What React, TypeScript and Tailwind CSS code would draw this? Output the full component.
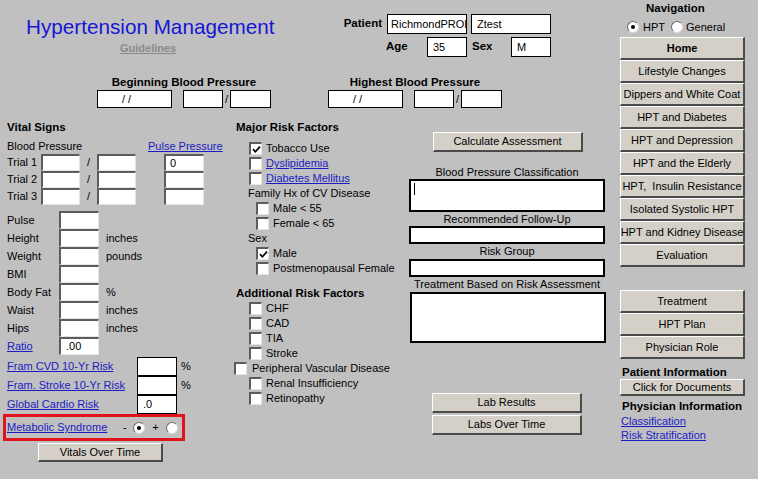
import React from 'react';

const sunken =
  'bg-white border-t-2 border-l-2 border-b border-r border-t-[#5c5c5c] border-l-[#5c5c5c] border-b-[#e4e4e4] border-r-[#e4e4e4]';
const flat = 'bg-white border border-black';
const btnCls =
  'flex items-center justify-center bg-[#d4d0c8] border-t border-l border-b-2 border-r-2 border-t-white border-l-white border-b-[#4a4a4a] border-r-[#4a4a4a] text-[11px] leading-none text-black';

const Box = ({ className = '', children }: { className?: string; children?: React.ReactNode }) => (
  <div className={`overflow-hidden whitespace-nowrap text-[11px] leading-none flex items-center ${className}`}>
    {children}
  </div>
);

const Btn = ({ label, className = '', bold }: { label: string; className?: string; bold?: boolean }) => (
  <div className={`${btnCls} ${bold ? 'font-bold text-[11.5px]' : ''} ${className}`}>{label}</div>
);

const Link = ({ children, className = '' }: { children: React.ReactNode; className?: string }) => (
  <span className={`text-[#1c1cc4] underline whitespace-nowrap ${className}`}>{children}</span>
);

const Check = ({ checked }: { checked?: boolean }) => (
  <span className={`w-[13px] h-[13px] shrink-0 flex items-center justify-center ${sunken}`}>
    {checked && (
      <svg width="9" height="9" viewBox="0 0 9 9">
        <path d="M1 4.2 L3.4 6.8 L8 1.6" fill="none" stroke="#000" strokeWidth="1.7" />
      </svg>
    )}
  </span>
);

const Radio = ({ on }: { on?: boolean }) => (
  <span className="w-[12px] h-[12px] shrink-0 rounded-full bg-white border border-t-[#6a6a6a] border-l-[#6a6a6a] border-b-[#dcdcdc] border-r-[#dcdcdc] flex items-center justify-center">
    {on && <span className="w-[4px] h-[4px] rounded-full bg-black" />}
  </span>
);

const CheckRow = ({
  label,
  checked,
  indent = 21,
  gap = 4,
  link,
}: {
  label: string;
  checked?: boolean;
  indent?: number;
  gap?: number;
  link?: boolean;
}) => (
  <div className="h-[15px] flex items-center" style={{ paddingLeft: indent }}>
    <Check checked={checked} />
    <span style={{ marginLeft: gap }} className="whitespace-nowrap">
      {link ? <Link>{label}</Link> : label}
    </span>
  </div>
);

const vitals: [string, string, string][] = [
  ['Pulse', '', ''],
  ['Height', '', 'inches'],
  ['Weight', '', 'pounds'],
  ['BMI', '', ''],
  ['Body Fat', '', '%'],
  ['Waist', '', 'inches'],
  ['Hips', '', 'inches'],
];

const navTop = [
  'Home',
  'Lifestyle Changes',
  'Dippers and White Coat',
  'HPT and Diabetes',
  'HPT and Depression',
  'HPT and the Elderly',
  'HPT,  Insulin Resistance',
  'Isolated Systolic HPT',
  'HPT and Kidney Disease',
  'Evaluation',
];

const BpGroup = ({ title, left }: { title: string; left: number }) => (
  <div className="flex flex-col items-center" style={{ marginLeft: left }}>
    <div className="h-[14px] mt-[15px] leading-[14px] font-bold text-[11.5px] whitespace-nowrap">{title}</div>
    <div className="flex items-center mt-[1px]">
      <Box className={`${flat} w-[75px] h-[18px] pl-[24px]`}>/ /</Box>
      <Box className={`${flat} w-[40px] h-[18px] ml-[11px]`} />
      <span className="w-[7px] text-center">/</span>
      <Box className={`${flat} w-[41px] h-[18px]`} />
    </div>
  </div>
);

export default function App() {
  return (
    <div className="w-[758px] h-[479px] bg-[#c0c0c0] overflow-hidden flex font-['Liberation_Sans',Arial,sans-serif] text-[11px] text-black">
      {/* main area */}
      <div className="w-[620px] flex flex-col">
        {/* header */}
        <div className="h-[118px] flex flex-col">
          <div className="h-[60px] flex">
            <div className="w-[330px] pl-[26px] pt-[15px] flex flex-col">
              <div className="text-[20.7px] leading-[24px] text-[#1616d6] whitespace-nowrap">Hypertension Management</div>
              <div className="ml-[94px] mt-[3px] text-[11px] leading-[13px] font-bold text-[#8a8a8a] underline">Guidelines</div>
            </div>
            <div className="pt-[14px] flex flex-col gap-[3px]">
              <div className="flex items-center h-[20px]">
                <span className="w-[52px] text-right font-bold text-[11.5px]">Patient</span>
                <Box className={`${flat} w-[80px] h-[20px] ml-[5px] pl-[3px]`}>RichmondPROD</Box>
                <Box className={`${flat} w-[80px] h-[20px] ml-[4px] pl-[5px]`}>Ztest</Box>
              </div>
              <div className="flex items-center h-[20px] pl-[56px]">
                <span className="w-[41px] font-bold text-[11.5px]">Age</span>
                <Box className={`${flat} w-[40px] h-[20px] pl-[5px]`}>35</Box>
                <span className="w-[44px] pl-[5px] font-bold text-[11.5px]">Sex</span>
                <Box className={`${flat} w-[40px] h-[20px] pl-[5px]`}>M</Box>
              </div>
            </div>
          </div>
          <div className="flex">
            <BpGroup title="Beginning Blood Pressure" left={97} />
            <BpGroup title="Highest Blood Pressure" left={57} />
          </div>
        </div>

        {/* body */}
        <div className="flex">
          {/* vital signs */}
          <div className="w-[228px] flex flex-col">
            <div className="h-[20px] pl-[7px] flex items-center font-bold text-[11.5px]">Vital Signs</div>
            <div className="h-[16px] pl-[7px] flex items-center">
              <span className="w-[141px]">Blood Pressure</span>
              <Link>Pulse Pressure</Link>
            </div>
            {['Trial 1', 'Trial 2', 'Trial 3'].map((t, i) => (
              <div key={t} className="h-[17px] pl-[7px] flex items-center">
                <span className="w-[34px]">{t}</span>
                <Box className={`${sunken} w-[39px] h-[17px]`} />
                <span className="w-[17px] text-center">/</span>
                <Box className={`${sunken} w-[39px] h-[17px]`} />
                <span className="w-[28px]" />
                <Box className={`${sunken} w-[40px] h-[17px] pl-[4px]`}>{i === 0 ? '0' : ''}</Box>
              </div>
            ))}
            <div className="mt-[6px] flex flex-col">
              {vitals.map(([l, v, u]) => (
                <div key={l} className="h-[18px] pl-[7px] flex items-center">
                  <span className="w-[52px]">{l}</span>
                  <Box className={`${sunken} w-[40px] h-[18px]`}>{v}</Box>
                  <span className="ml-[7px]">{u}</span>
                </div>
              ))}
              <div className="h-[18px] pl-[7px] flex items-center">
                <span className="w-[52px]">
                  <Link>Ratio</Link>
                </span>
                <Box className={`${sunken} w-[40px] h-[18px] pl-[5px]`}>.00</Box>
              </div>
            </div>
            <div className="mt-[2px] flex flex-col">
              {[
                ['Fram CVD 10-Yr Risk', '', '%'],
                ['Fram. Stroke 10-Yr Risk', '', '%'],
                ['Global Cardio Risk', '.0', ''],
              ].map(([l, v, u]) => (
                <div key={l} className="h-[19px] pl-[7px] flex items-center">
                  <span className="w-[130px]">
                    <Link>{l}</Link>
                  </span>
                  <Box className={`${flat} w-[40px] h-[19px] pl-[5px]`}>{v}</Box>
                  <span className="ml-[4px]">{u}</span>
                </div>
              ))}
            </div>
            <div className="ml-[3px] w-[182px] h-[27px] border-[3px] border-[#e0141a] flex items-center pl-[1px]">
              <span className="w-[116px]">
                <Link>Metabolic Syndrome</Link>
              </span>
              <span className="w-[10px]">-</span>
              <Radio on />
              <span className="w-[21px] text-center">+</span>
              <Radio />
            </div>
            <Btn label="Vitals Over Time" className="ml-[38px] mt-[2px] w-[125px] h-[19px] text-[11.5px]" />
          </div>

          {/* risk factors */}
          <div className="w-[177px] flex flex-col">
            <div className="h-[20px] pl-[8px] flex items-center font-bold text-[11.5px]">Major Risk Factors</div>
            <div className="mt-[3px] flex flex-col">
              <CheckRow label="Tobacco Use" checked />
              <CheckRow label="Dyslipidemia" link />
              <CheckRow label="Diabetes Mellitus" link />
              <div className="h-[15px] pl-[20px] flex items-center">Family Hx of CV Disease</div>
              <CheckRow label="Male < 55" indent={28} />
              <CheckRow label="Female < 65" indent={28} />
              <div className="h-[15px] pl-[20px] flex items-center">Sex</div>
              <CheckRow label="Male" checked indent={28} />
              <CheckRow label="Postmenopausal Female" indent={28} />
            </div>
            <div className="mt-[10px] h-[15px] pl-[8px] flex items-center font-bold text-[11.5px]">Additional Risk Factors</div>
            <CheckRow label="CHF" />
            <CheckRow label="CAD" />
            <CheckRow label="TIA" />
            <CheckRow label="Stroke" />
            <CheckRow label="Peripheral Vascular Disease" indent={6} gap={5} />
            <CheckRow label="Renal Insufficiency" />
            <CheckRow label="Retinopathy" />
          </div>

          {/* assessment */}
          <div className="w-[207px] flex flex-col">
            <Btn label="Calculate Assessment" className="ml-[28px] mt-[14px] w-[150px] h-[20px]" />
            <div className="mt-[13px] ml-[4px] w-[196px] h-[14px] flex items-center justify-center">Blood Pressure Classification</div>
            <div className="ml-[4px] w-[196px] h-[33px] bg-white border-2 border-black">
              <div className="ml-[3px] mt-[2px] w-[1px] h-[12px] bg-black" />
            </div>
            <div className="ml-[4px] w-[196px] h-[14px] flex items-center justify-center">Recommended Follow-Up</div>
            <div className="ml-[4px] w-[196px] h-[18px] bg-white border-2 border-black" />
            <div className="ml-[4px] w-[196px] h-[15px] flex items-center justify-center">Risk Group</div>
            <div className="ml-[4px] w-[196px] h-[18px] bg-white border-2 border-black" />
            <div className="ml-[4px] w-[196px] h-[15px] flex items-center justify-center whitespace-nowrap">Treatment Based on Risk Assessment</div>
            <div className="ml-[5px] w-[196px] h-[51px] bg-white border-2 border-black" />
            <Btn label="Lab Results" className="ml-[27px] mt-[50px] w-[150px] h-[20px]" />
            <Btn label="Labs Over Time" className="ml-[27px] mt-[2px] w-[150px] h-[20px]" />
          </div>
        </div>
      </div>

      {/* navigation */}
      <div className="w-[125px] flex flex-col">
        <div className="mt-[2px] h-[14px] pl-[26px] flex items-center font-bold text-[11.5px]">Navigation</div>
        <div className="mt-[4px] h-[14px] pl-[7px] flex items-center">
          <Radio on />
          <span className="w-[32px] pl-[4px]">HPT</span>
          <Radio />
          <span className="pl-[3px]">General</span>
        </div>
        <div className="mt-[3px] flex flex-col">
          {navTop.map((n) => (
            <Btn key={n} label={n} bold={n === 'Home'} className="h-[23px] w-[125px] whitespace-pre text-[10.8px]" />
          ))}
        </div>
        <div className="mt-[23px] flex flex-col">
          {['Treatment', 'HPT Plan', 'Physician Role'].map((n) => (
            <Btn key={n} label={n} className="h-[23px] w-[125px]" />
          ))}
        </div>
        <div className="mt-[7px] h-[13px] pl-[2px] flex items-center font-bold text-[11.5px] whitespace-nowrap">Patient Information</div>
        <Btn label="Click for Documents" className="h-[17px] w-[125px]" />
        <div className="mt-[4px] h-[14px] pl-[2px] flex items-center font-bold text-[11.5px] whitespace-nowrap">Physician Information</div>
        <div className="h-[14px] pl-[1px] flex items-center">
          <Link>Classification</Link>
        </div>
        <div className="h-[14px] pl-[1px] flex items-center">
          <Link>Risk Stratification</Link>
        </div>
      </div>
    </div>
  );
}
